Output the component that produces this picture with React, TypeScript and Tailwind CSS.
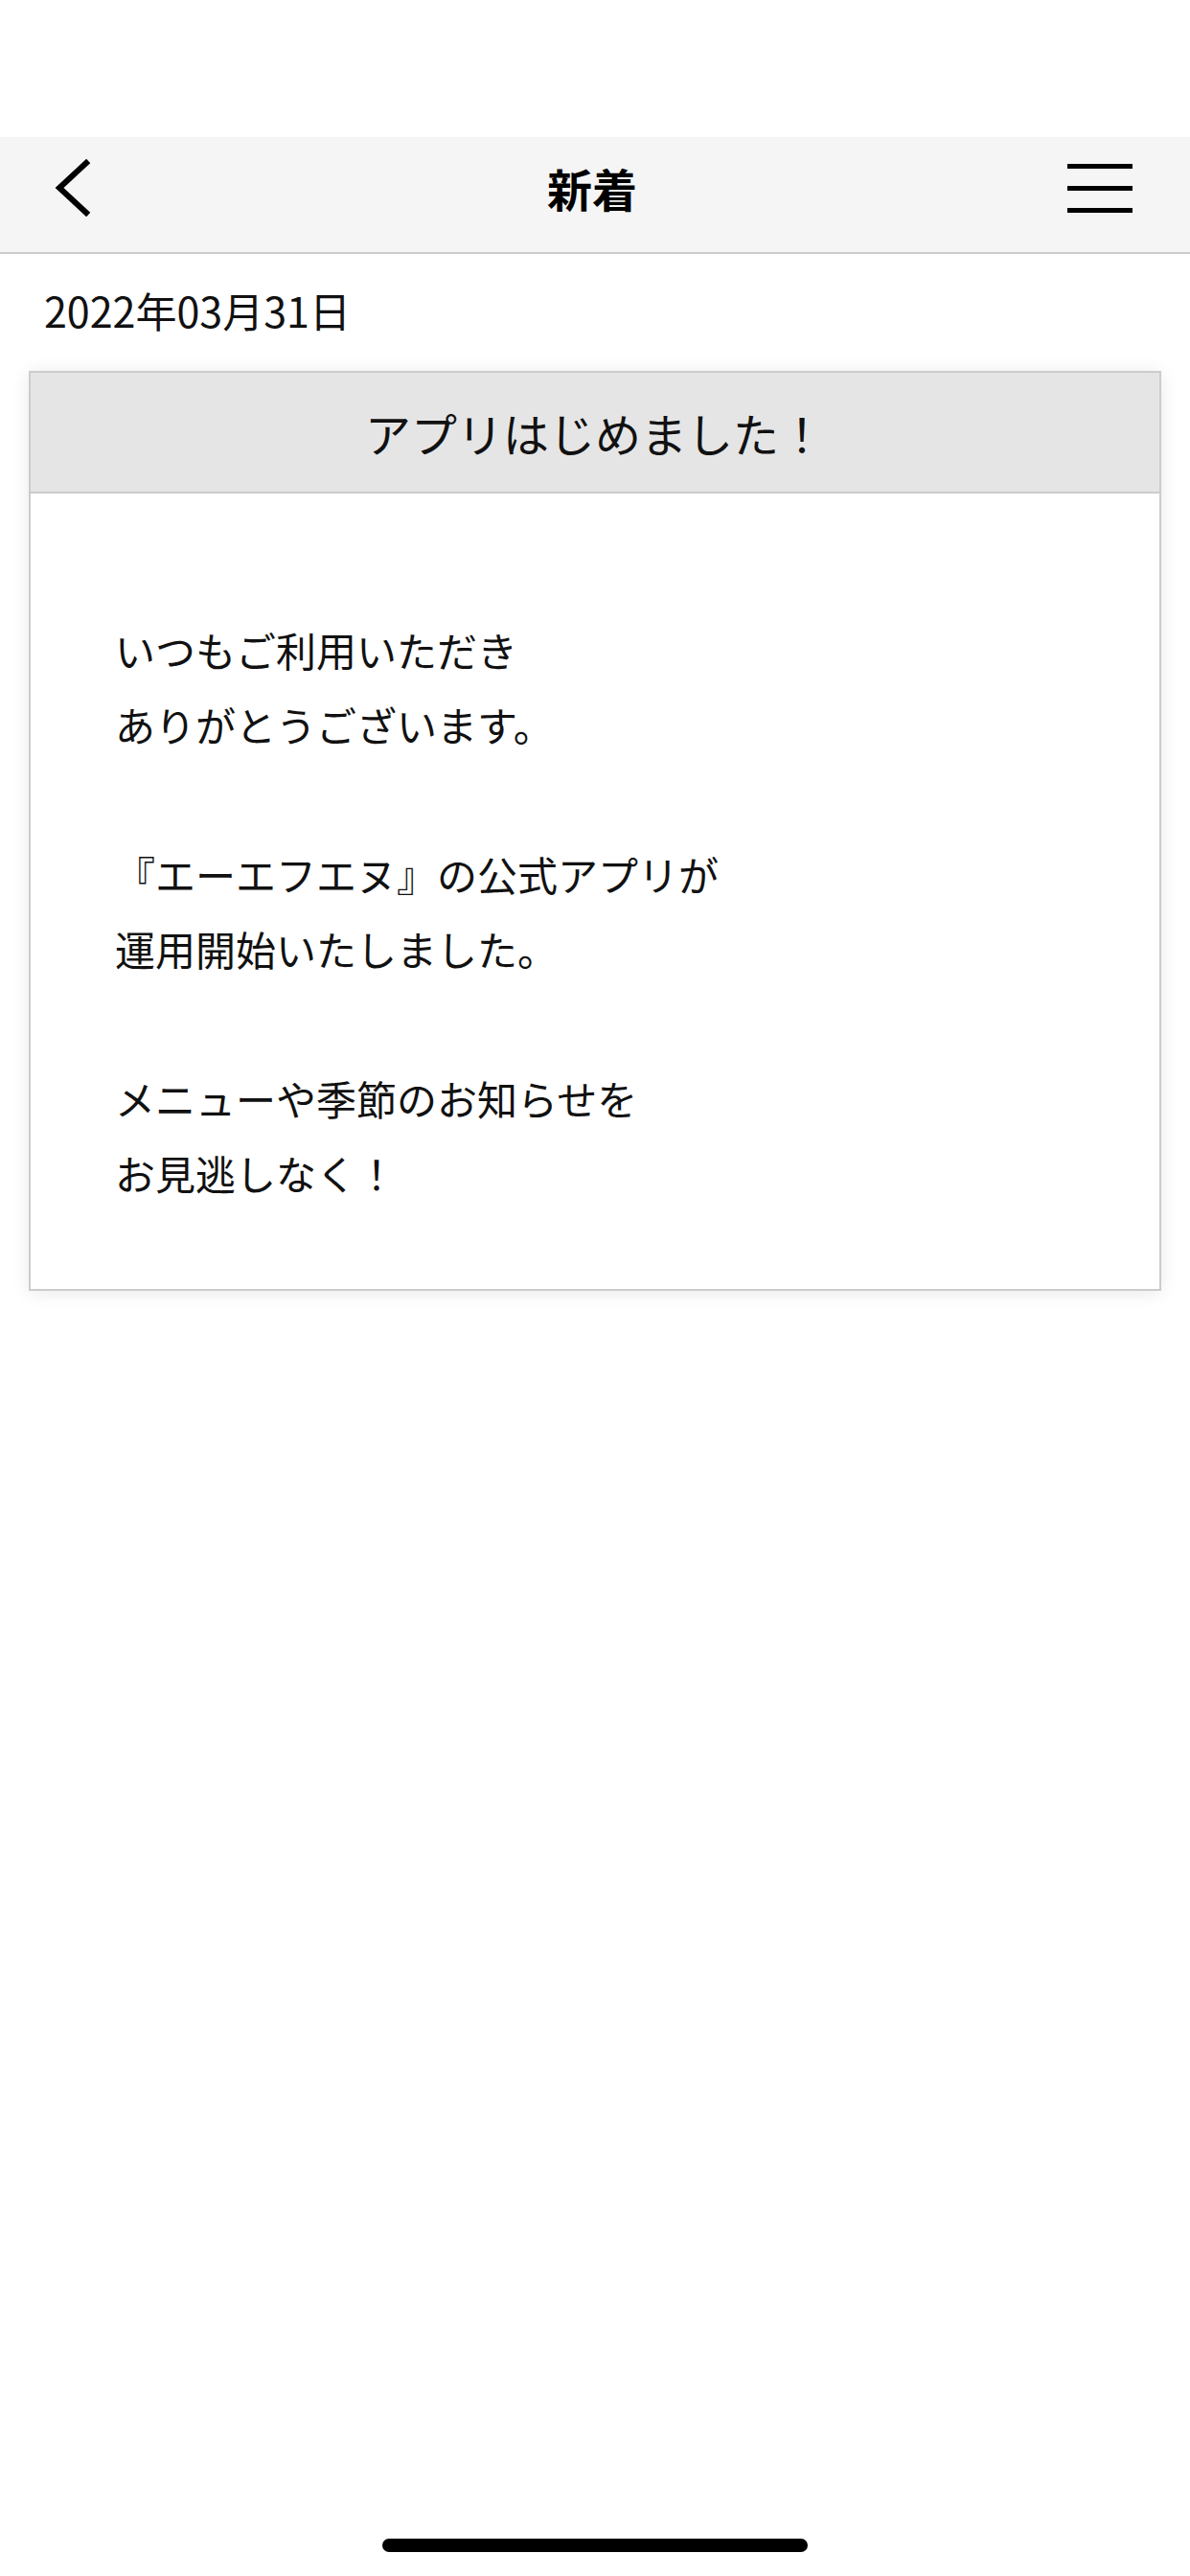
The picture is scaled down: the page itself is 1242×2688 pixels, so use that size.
const font = { fontFamily: '"Noto Sans CJK JP", "Noto Sans", sans-serif' };

const paragraphs = [
  ['いつもご利用いただき', 'ありがとうございます。'],
  ['『エーエフエヌ』の公式アプリが', '運用開始いたしました。'],
  ['メニューや季節のお知らせを', 'お見逃しなく！'],
];

function BackIcon() {
  return (
    <svg width="44" height="60" viewBox="0 0 44 60" fill="none">
      <polyline points="36,4 8,30 36,56" stroke="#000" strokeWidth="6" strokeLinecap="square" />
    </svg>
  );
}

function MenuIcon() {
  return (
    <div className="flex w-[68px] flex-col gap-[18px]">
      <div className="h-[5px] w-full bg-black" />
      <div className="h-[5px] w-full bg-black" />
      <div className="h-[5px] w-full bg-black" />
    </div>
  );
}

export default function App() {
  return (
    <div className="relative flex h-[2688px] w-[1242px] flex-col bg-white text-[#111]" style={font}>
      {/* status bar space */}
      <div className="h-[143px]" />

      {/* header */}
      <div className="grid h-[122px] grid-cols-[1fr_auto_1fr] items-center border-b-2 border-[#cccccc] bg-[#f5f5f5] pb-[14px] pl-[54px] pr-[60px]">
        <div className="flex">
          <BackIcon />
        </div>
        <h1 className="text-[47px] font-bold text-black">新着</h1>
        <div className="flex justify-end">
          <MenuIcon />
        </div>
      </div>

      {/* date */}
      <div className="pl-[46px] pt-[34px] text-[43px] leading-[48px]">2022年03月31日</div>

      {/* card */}
      <div className="mx-[30px] mt-[40px] border-2 border-[#cccccc] bg-white shadow-[0_2px_18px_rgba(0,0,0,0.09)]">
        <div className="flex h-[126px] items-center justify-center border-b-2 border-[#cccccc] bg-[#e5e5e5] text-[48px]">
          アプリはじめました！
        </div>
        <div className="flex flex-col gap-[78px] pb-[82px] pl-[88px] pt-[124px] text-[42px] leading-[78px]">
          {paragraphs.map((p, i) => (
            <div key={i}>
              {p.map((line) => (
                <div key={line}>{line}</div>
              ))}
            </div>
          ))}
        </div>
      </div>

      {/* home indicator */}
      <div className="absolute bottom-[25px] left-[399px] h-[14px] w-[444px] rounded-full bg-black" />
    </div>
  );
}
